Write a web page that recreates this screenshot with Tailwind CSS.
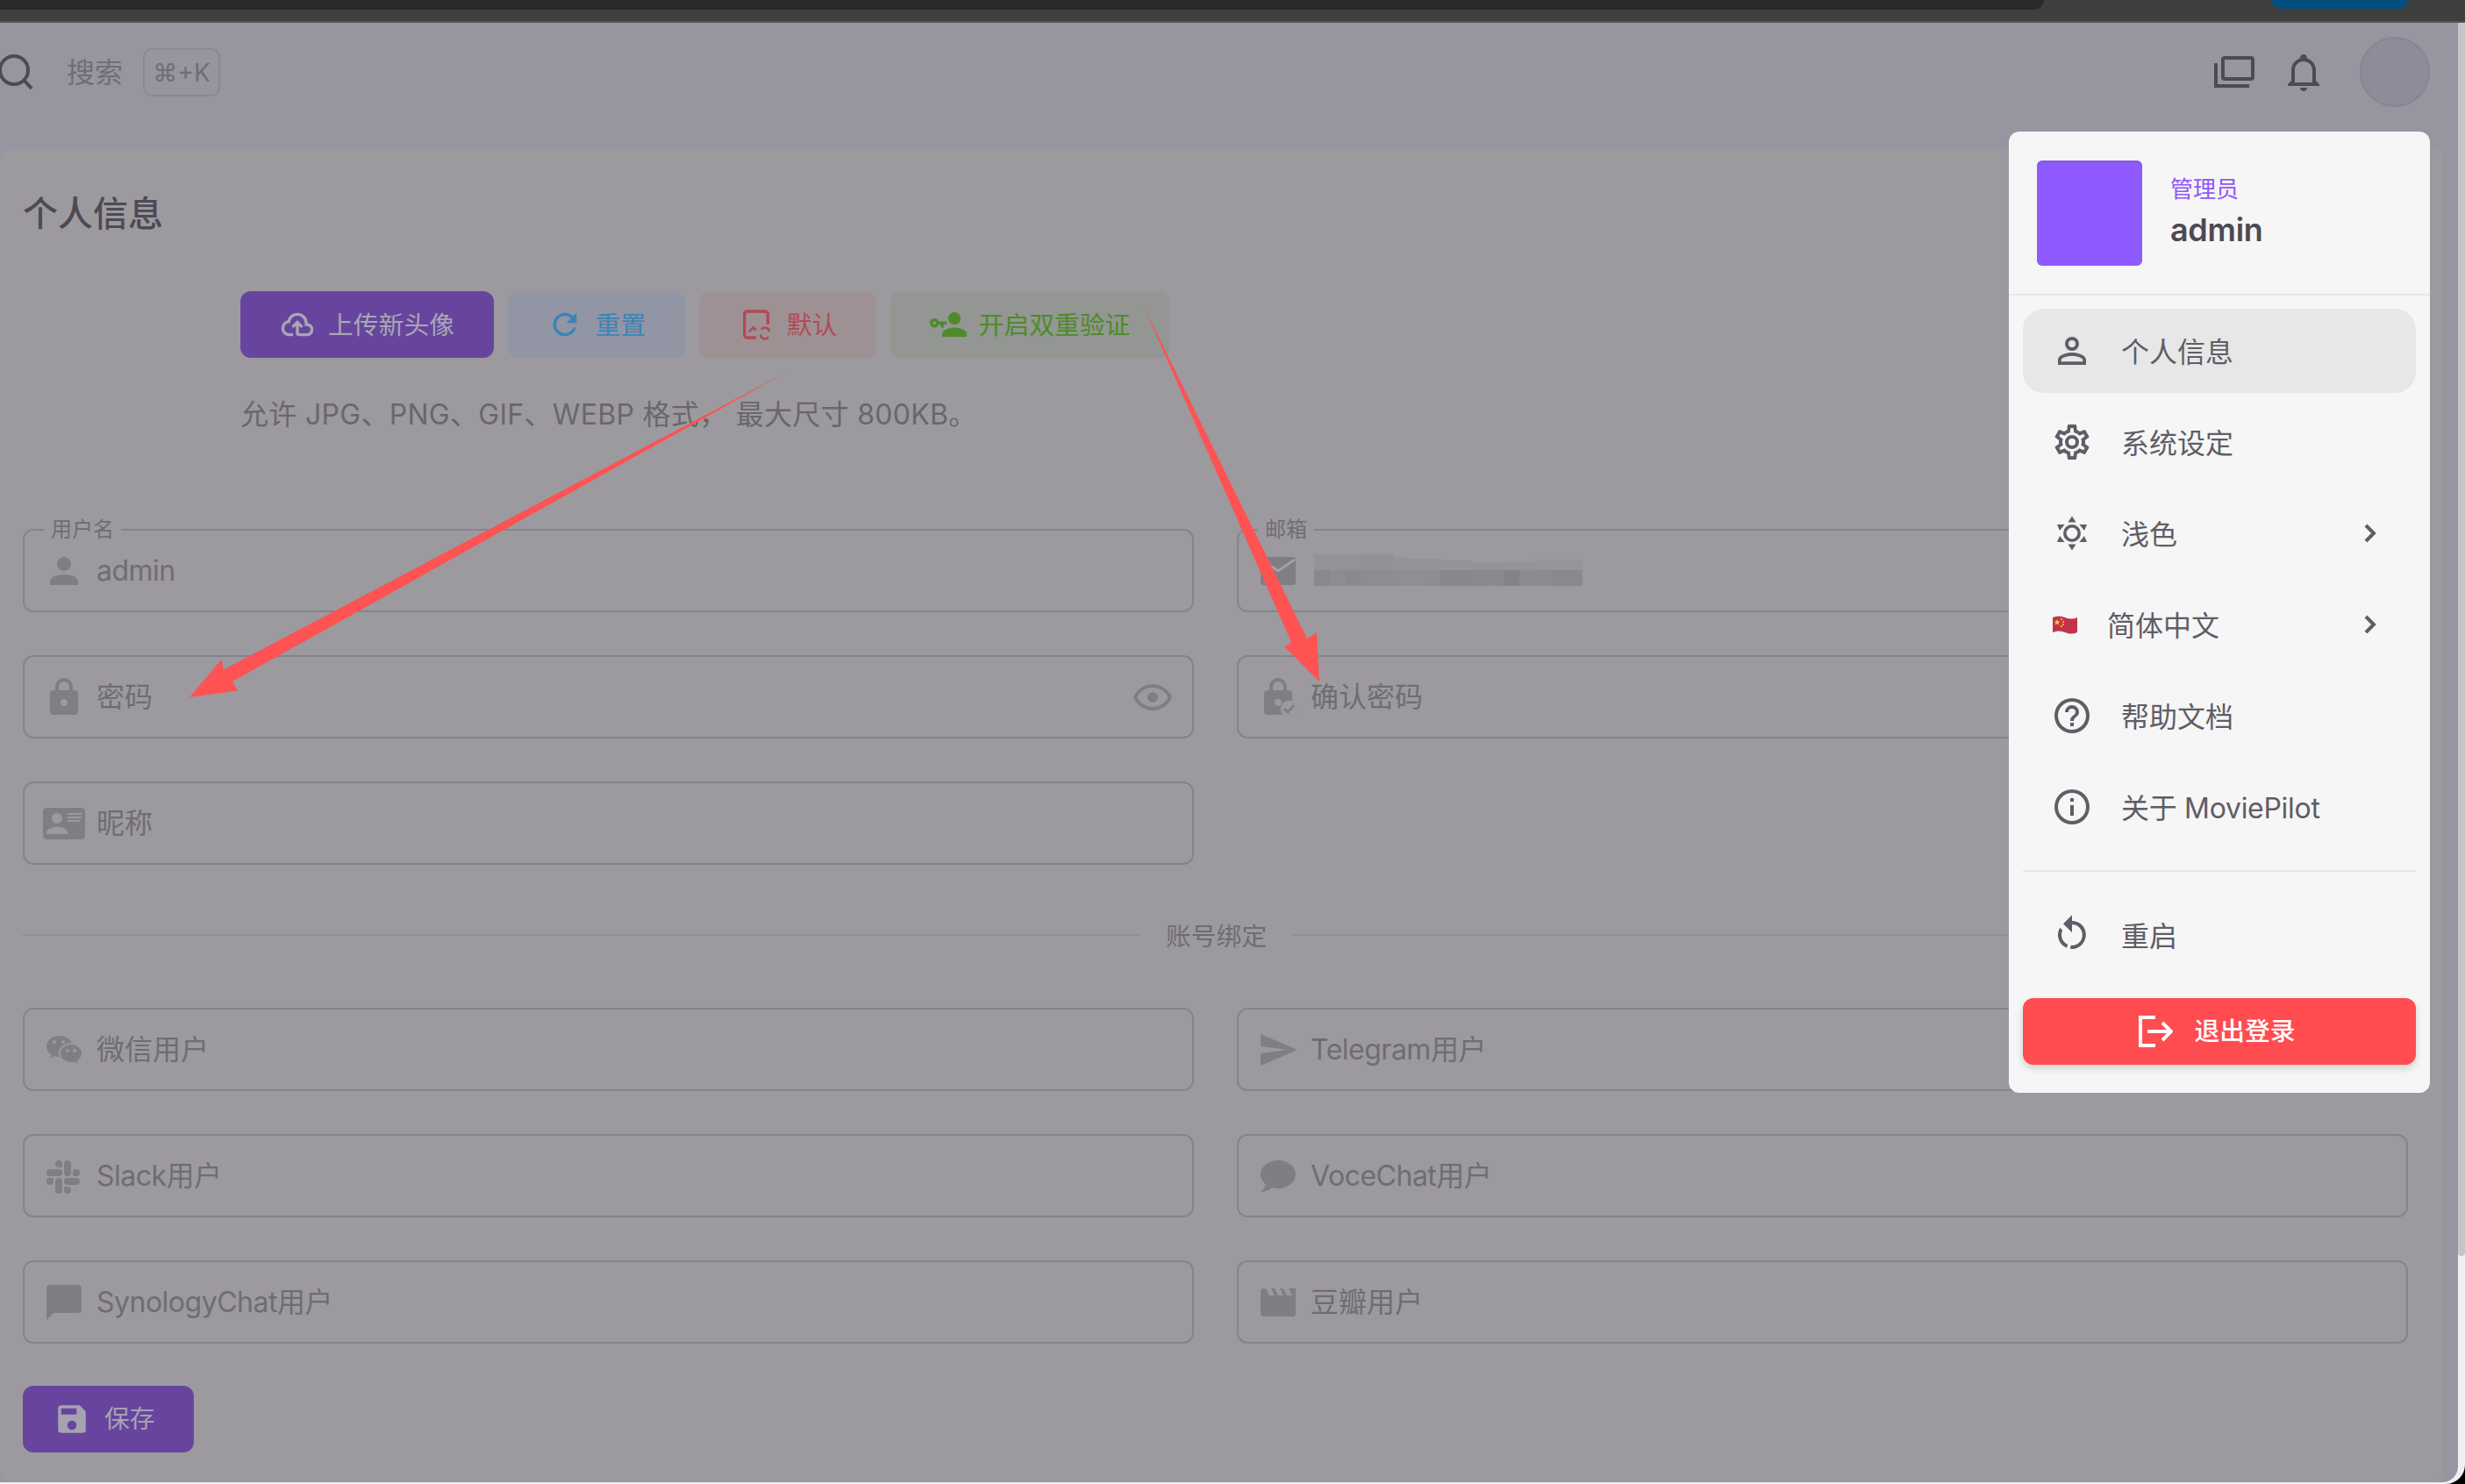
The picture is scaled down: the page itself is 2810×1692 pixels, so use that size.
<!DOCTYPE html>
<html lang="zh-CN">
<head>
    <meta charset="UTF-8">
    <meta name="viewport" content="width=device-width, initial-scale=1.0">
    <title>个人信息</title>
    <script src="https://cdn.jsdelivr.net/npm/@tailwindcss/browser@4"></script>
</head>
<body class="h-[1692px] w-[2810px] overflow-hidden bg-black [font-family:'Inter','Noto_Sans_CJK_SC',sans-serif] text-[#6f6d73]">
<div class="relative h-[1692px] w-[2810px] overflow-hidden rounded-br-[22px] bg-[#f0f0f4]">

    <!-- browser chrome strip -->
    <div class="flex h-[26px] items-start justify-between border-b-2 border-[#56555a] bg-[#3f3f3f]">
        <div class="h-[11px] w-[2330px] rounded-br-[24px] bg-[#2a2a2a]"></div>
        <div class="mr-[65px] h-[10px] w-[155px] rounded-b-[20px] bg-[#004f7f]"></div>
    </div>

    <div class="flex">
        <div class="h-[1664px] w-[2802px] rounded-br-[18px] bg-[#97959f]">
            <!-- top bar -->
            <header class="flex h-[144px] items-start justify-between pt-[16px] pr-[32px]">
                <div class="flex h-[80px] items-center">
                    <svg class="ml-[-3px] h-[42px] w-[42px] text-[#4d4a54]" viewBox="0 0 42 42" fill="none" stroke="currentColor" stroke-width="4"><circle cx="19" cy="19" r="16"/><path d="M30 30l9 10"/></svg>
                    <span class="ml-[37px] pt-[2px] text-[32px] text-[#706e76]">搜索</span>
                    <span class="ml-[23px] flex h-[55px] w-[88px] items-center justify-center rounded-[10px] border-2 border-[#8a8891] pt-[2px] text-[28px] text-[#706e76]">⌘+K</span>
                </div>
                <div class="flex h-[80px] items-center">
                    <svg class="h-[44px] w-[48px] text-[#4d4a54]" viewBox="0 0 48 44" fill="none" stroke="currentColor" stroke-width="4"><rect x="12" y="6" width="34" height="24" rx="2"/><path d="M4 12v26h38"/></svg>
                    <svg class="ml-[32px] h-[48px] w-[48px] text-[#4d4a54]" viewBox="0 0 24 24" fill="currentColor"><path d="M10 21H14C14 22.1 13.1 23 12 23S10 22.1 10 21M21 19V20H3V19L5 17V11C5 7.9 7 5.2 10 4.3V4C10 2.9 10.9 2 12 2S14 2.9 14 4V4.3C17 5.2 19 7.9 19 11V17L21 19M17 11C17 8.2 14.8 6 12 6S7 8.2 7 11V18H17V11Z"/></svg>
                    <div class="ml-[40px] h-[80px] w-[80px] rounded-full border-2 border-[#88858f] bg-[#8f8b9a]"></div>
                </div>
            </header>

            <!-- profile card -->
            <main class="h-[1520px] w-[2785px] rounded-[12px] bg-[#9c9a9e] pt-[46px] pr-[40px] pl-[26px]">
                <h1 class="pt-[2px] text-[40px] leading-[52px] font-medium text-[#4d4a54]">个人信息</h1>

                <div class="mt-[62px] ml-[248px] flex gap-[16px] text-[28.8px]">
                    <div class="flex h-[76px] w-[289px] items-center justify-center gap-[15px] rounded-[12px] bg-[#67459f] text-[#aaa6b4]">
                        <svg class="h-[40px] w-[40px]" viewBox="0 0 24 24" fill="currentColor"><path d="M6.500 20Q4.220 20 2.610 18.430 1 16.850 1 14.580 1 12.630 2.170 11.100 3.350 9.570 5.250 9.150 5.880 6.850 7.750 5.430 9.630 4 12 4 14.930 4 16.960 6.040 19 8.070 19 11 20.730 11.200 21.860 12.500 23 13.780 23 15.500 23 17.380 21.690 18.690 20.380 20 18.500 20H13Q12.180 20 11.590 19.410 11 18.830 11 18V12.850L9.400 14.400L8 13L12 9L16 13L14.600 14.400L13 12.850V18H18.500Q19.550 18 20.270 17.270 21 16.550 21 15.500 21 14.450 20.270 13.730 19.550 13 18.500 13H17V11Q17 8.930 15.540 7.460 14.080 6 12 6 9.930 6 8.460 7.460 7 8.930 7 11H6.500Q5.050 11 4.030 12.030 3 13.050 3 14.500 3 15.950 4.030 17 5.050 18 6.500 18H9V20Z"/></svg>
                        <span class="pt-[2px]">上传新头像</span>
                    </div>
                    <div class="flex h-[76px] w-[202px] items-center justify-center gap-[15px] rounded-[12px] bg-[#9295a3] text-[#3a84b8]">
                        <svg class="h-[40px] w-[40px]" viewBox="0 0 24 24" fill="currentColor"><path d="M17.65,6.35C16.2,4.9 14.21,4 12,4A8,8 0 0,0 4,12A8,8 0 0,0 12,20C15.73,20 18.84,17.45 19.73,14H17.65C16.83,16.33 14.61,18 12,18A6,6 0 0,1 6,12A6,6 0 0,1 12,6C13.66,6 15.14,6.69 16.22,7.78L13,11H20V4L17.65,6.35Z"/></svg>
                        <span class="pt-[2px]">重置</span>
                    </div>
                    <div class="flex h-[76px] w-[202px] items-center justify-center gap-[15px] rounded-[12px] bg-[#9e9194] text-[#b14a54]">
                        <svg class="h-[40px] w-[40px]" viewBox="0 0 24 24" fill="none" stroke="currentColor" stroke-width="2"><path d="M20 12V5a2 2 0 0 0-2-2H6a2 2 0 0 0-2 2v14a2 2 0 0 0 2 2h6"/><path d="M7 17l3-3 2 2" stroke-width="1.6"/><path d="M21 17a3 3 0 0 0-5.500-1.500M15 19a3 3 0 0 0 5.500 1.500" stroke-width="1.500"/></svg>
                        <span class="pt-[2px]">默认</span>
                    </div>
                    <div class="flex h-[76px] w-[318px] items-center justify-center gap-[14px] rounded-[12px] bg-[#939692] text-[#4f8a2a]">
                        <svg class="h-[42px] w-[42px]" viewBox="0 0 24 24" fill="currentColor"><path d="M11 10V12H9V14H7V12H5.820C5.400 13.170 4.290 14 3 14C1.340 14 0 12.660 0 11S1.340 8 3 8C4.290 8 5.400 8.830 5.820 10H11M3 10C2.450 10 2 10.450 2 11S2.450 12 3 12 4 11.550 4 11 3.550 10 3 10M16 14C18.670 14 24 15.340 24 18V20H8V18C8 15.340 13.330 14 16 14M16 12C13.790 12 12 10.210 12 8S13.790 4 16 4 20 5.790 20 8 18.210 12 16 12Z"/></svg>
                        <span class="pt-[2px]">开启双重验证</span>
                    </div>
                </div>

                <p class="mt-[43px] ml-[248px] text-[32px] leading-[44px] tracking-[0.3px] text-[#69676d]">允许 JPG、PNG、GIF、WEBP 格式， 最大尺寸 800KB。</p>

                <div class="mt-[108px] grid grid-cols-2 gap-x-[49px] gap-y-[49px] text-[32px]">
                    <div class="relative flex h-[95px] items-center gap-[13px] rounded-[12px] border-2 border-[#86848a] pl-[21px]">
                        <span class="absolute top-[-16px] left-[22px] bg-[#9c9a9e] px-[8px] text-[24px] leading-[30px]">用户名</span>
                        <svg class="h-[48px] w-[48px] text-[#807e85]" viewBox="0 0 24 24" fill="currentColor"><path d="M12,4A4,4 0 0,1 16,8A4,4 0 0,1 12,12A4,4 0 0,1 8,8A4,4 0 0,1 12,4M12,14C16.42,14 20,15.79 20,18V20H4V18C4,15.79 7.58,14 12,14Z"/></svg>
                        <span class="tracking-[-0.5px]">admin</span>
                    </div>
                    <div class="relative flex h-[95px] items-center gap-[13px] rounded-[12px] border-2 border-[#86848a] pl-[21px]">
                        <span class="absolute top-[-16px] left-[22px] bg-[#9c9a9e] px-[8px] text-[24px] leading-[30px]">邮箱</span>
                        <svg class="h-[48px] w-[48px] text-[#807e85]" viewBox="0 0 24 24"><rect x="2" y="4" width="20" height="16" rx="1.500" fill="currentColor"/><path d="M2.500 5.500L12 12L21.500 5.500" fill="none" stroke="#a3a1a6" stroke-width="1.400"/></svg>
                        <!-- pixelated-out address -->
                        <div class="mt-[-2px] ml-[4px] flex w-[306px] flex-col">
                            <div class="flex h-[18px] items-end">
                                <div class="h-[18px] w-[54px] bg-[#949297]"></div>
                                <div class="h-[18px] w-[18px] bg-[#939196]"></div>
                                <div class="h-[18px] w-[18px] bg-[#929095]"></div>
                                <div class="h-[15px] w-[18px] bg-[#959398]"></div>
                                <div class="h-[13px] w-[36px] bg-[#949297]"></div>
                                <div class="h-[11px] w-[36px] bg-[#959398]"></div>
                                <div class="h-[8px] w-[36px] bg-[#959398]"></div>
                                <div class="h-[10px] w-[36px] bg-[#969499]"></div>
                                <div class="h-[12px] w-[54px] bg-[#97959a]"></div>
                            </div>
                            <div class="flex h-[18px]">
                                <div class="h-full w-[18px] bg-[#8a888d]"></div>
                                <div class="h-full w-[18px] bg-[#8e8c91]"></div>
                                <div class="h-full w-[18px] bg-[#8b898e]"></div>
                                <div class="h-full w-[36px] bg-[#8e8c91]"></div>
                                <div class="h-full w-[36px] bg-[#908e93]"></div>
                                <div class="h-full w-[18px] bg-[#8f8d92]"></div>
                                <div class="h-full w-[36px] bg-[#89878c]"></div>
                                <div class="h-full w-[18px] bg-[#8a888d]"></div>
                                <div class="h-full w-[18px] bg-[#8b898e]"></div>
                                <div class="h-full w-[18px] bg-[#85838a]"></div>
                                <div class="h-full w-[36px] bg-[#8d8b90]"></div>
                                <div class="h-full w-[36px] bg-[#8a888d]"></div>
                            </div>
                        </div>
                    </div>
                    <div class="flex h-[95px] items-center gap-[13px] rounded-[12px] border-2 border-[#86848a] pr-[21px] pl-[21px]">
                        <svg class="h-[48px] w-[48px] text-[#807e85]" viewBox="0 0 24 24" fill="currentColor"><path d="M12,17A2,2 0 0,0 14,15C14,13.89 13.1,13 12,13A2,2 0 0,0 10,15A2,2 0 0,0 12,17M18,8A2,2 0 0,1 20,10V20A2,2 0 0,1 18,22H6A2,2 0 0,1 4,20V10C4,8.89 4.9,8 6,8H7V6A5,5 0 0,1 12,1A5,5 0 0,1 17,6V8H18M12,3A3,3 0 0,0 9,6V8H15V6A3,3 0 0,0 12,3Z"/></svg>
                        <span class="flex-1">密码</span>
                        <svg class="h-[48px] w-[48px] text-[#807e85]" viewBox="0 0 24 24" fill="currentColor"><path d="M12,9A3,3 0 0,1 15,12A3,3 0 0,1 12,15A3,3 0 0,1 9,12A3,3 0 0,1 12,9M12,4.5C17,4.5 21.27,7.61 23,12C21.27,16.39 17,19.5 12,19.5C7,19.5 2.73,16.39 1,12C2.73,7.61 7,4.5 12,4.5M3.18,12C4.83,15.36 8.24,17.5 12,17.5C15.76,17.5 19.17,15.36 20.82,12C19.17,8.64 15.76,6.5 12,6.5C8.24,6.5 4.83,8.64 3.18,12Z"/></svg>
                    </div>
                    <div class="flex h-[95px] items-center gap-[13px] rounded-[12px] border-2 border-[#86848a] pl-[21px]">
                        <svg class="h-[48px] w-[48px] text-[#807e85]" viewBox="0 0 24 24" fill="currentColor"><path d="M12,17A2,2 0 0,0 14,15C14,13.89 13.1,13 12,13A2,2 0 0,0 10,15A2,2 0 0,0 12,17M18,8A2,2 0 0,1 20,10V20A2,2 0 0,1 18,22H6A2,2 0 0,1 4,20V10C4,8.89 4.9,8 6,8H7V6A5,5 0 0,1 12,1A5,5 0 0,1 17,6V8H18M12,3A3,3 0 0,0 9,6V8H15V6A3,3 0 0,0 12,3Z"/><circle cx="18" cy="18.5" r="4.6" fill="#9c9a9e"/><path d="M15.5 18.5l2 2 3.5-4" fill="none" stroke="currentColor" stroke-width="1.5"/></svg>
                        <span>确认密码</span>
                    </div>
                    <div class="flex h-[95px] items-center gap-[13px] rounded-[12px] border-2 border-[#86848a] pl-[21px]">
                        <svg class="h-[48px] w-[48px] text-[#807e85]" viewBox="0 0 24 24" fill="currentColor"><path d="M2,3H22C23.05,3 24,3.95 24,5V19C24,20.05 23.05,21 22,21H2C0.95,21 0,20.05 0,19V5C0,3.95 0.95,3 2,3M14,6V7H22V6H14M14,8V9H21.5L22,9V8H14M14,10V11H21V10H14M8,13.91C6,13.91 2,15 2,17V18H14V17C14,15 10,13.91 8,13.91M8,6A3,3 0 0,0 5,9A3,3 0 0,0 8,12A3,3 0 0,0 11,9A3,3 0 0,0 8,6Z"/></svg>
                        <span>昵称</span>
                    </div>
                </div>

                <div class="mt-[63px] flex h-[34px] items-center text-[28.8px]">
                    <div class="h-[2px] w-[1273px] bg-[#8f8d92]"></div>
                    <span class="mx-[30px] pt-[3px] whitespace-nowrap">账号绑定</span>
                    <div class="h-[2px] flex-1 bg-[#8f8d92]"></div>
                </div>

                <div class="mt-[66px] grid grid-cols-2 gap-x-[49px] gap-y-[49px] text-[32px]">
                    <div class="flex h-[95px] items-center gap-[13px] rounded-[12px] border-2 border-[#86848a] pl-[21px]">
                        <svg class="h-[48px] w-[48px] text-[#807e85]" viewBox="0 0 24 24" fill="currentColor"><path d="M9.5,4C5.36,4 2,6.69 2,10C2,11.89 3.08,13.56 4.78,14.66L4,17L6.5,15.5C7.39,15.81 8.37,16 9.41,16C9.15,15.37 9,14.7 9,14C9,10.69 12.13,8 16,8C16.19,8 16.38,8 16.56,8.03C15.54,5.69 12.78,4 9.5,4M6.5,6.5A1,1 0 0,1 7.5,7.5A1,1 0 0,1 6.5,8.5A1,1 0 0,1 5.5,7.5A1,1 0 0,1 6.5,6.5M11.5,6.5A1,1 0 0,1 12.5,7.5A1,1 0 0,1 11.5,8.5A1,1 0 0,1 10.5,7.5A1,1 0 0,1 11.5,6.5M16,9C12.69,9 10,11.24 10,14C10,16.76 12.69,19 16,19C16.67,19 17.31,18.9 17.91,18.73L20,20L19.38,18.13C20.95,17.22 22,15.71 22,14C22,11.24 19.31,9 16,9M14,11.5A1,1 0 0,1 15,12.5A1,1 0 0,1 14,13.5A1,1 0 0,1 13,12.5A1,1 0 0,1 14,11.5M18,11.5A1,1 0 0,1 19,12.5A1,1 0 0,1 18,13.5A1,1 0 0,1 17,12.5A1,1 0 0,1 18,11.5Z"/></svg>
                        <span>微信用户</span>
                    </div>
                    <div class="flex h-[95px] items-center gap-[13px] rounded-[12px] border-2 border-[#86848a] pl-[21px]">
                        <svg class="h-[48px] w-[48px] text-[#807e85]" viewBox="0 0 24 24" fill="currentColor"><path d="M2,21L23,12L2,3V10L17,12L2,14V21Z"/></svg>
                        <span class="tracking-[-0.5px]">Telegram用户</span>
                    </div>
                    <div class="flex h-[95px] items-center gap-[13px] rounded-[12px] border-2 border-[#86848a] pl-[21px]">
                        <svg class="h-[48px] w-[48px] text-[#807e85]" viewBox="0 0 24 24" fill="currentColor"><path d="M6,15A2,2 0 0,1 4,17A2,2 0 0,1 2,15A2,2 0 0,1 4,13H6V15M7,15A2,2 0 0,1 9,13A2,2 0 0,1 11,15V20A2,2 0 0,1 9,22A2,2 0 0,1 7,20V15M9,7A2,2 0 0,1 7,5A2,2 0 0,1 9,3A2,2 0 0,1 11,5V7H9M9,8A2,2 0 0,1 11,10A2,2 0 0,1 9,12H4A2,2 0 0,1 2,10A2,2 0 0,1 4,8H9M17,10A2,2 0 0,1 19,8A2,2 0 0,1 21,10A2,2 0 0,1 19,12H17V10M16,10A2,2 0 0,1 14,12A2,2 0 0,1 12,10V5A2,2 0 0,1 14,3A2,2 0 0,1 16,5V10M14,18A2,2 0 0,1 16,20A2,2 0 0,1 14,22A2,2 0 0,1 12,20V18H14M14,17A2,2 0 0,1 12,15A2,2 0 0,1 14,13H19A2,2 0 0,1 21,15A2,2 0 0,1 19,17H14Z"/></svg>
                        <span class="tracking-[-0.5px]">Slack用户</span>
                    </div>
                    <div class="flex h-[95px] items-center gap-[13px] rounded-[12px] border-2 border-[#86848a] pl-[21px]">
                        <svg class="h-[48px] w-[48px] text-[#807e85]" viewBox="0 0 24 24" fill="currentColor"><path d="M12,3C17.5,3 22,6.58 22,11C22,15.42 17.5,19 12,19C10.76,19 9.57,18.82 8.47,18.5C5.55,21 2,21 2,21C4.33,18.67 4.7,17.1 4.75,16.5C3.05,15.07 2,13.13 2,11C2,6.58 6.5,3 12,3Z"/></svg>
                        <span class="tracking-[-0.5px]">VoceChat用户</span>
                    </div>
                    <div class="flex h-[95px] items-center gap-[13px] rounded-[12px] border-2 border-[#86848a] pl-[21px]">
                        <svg class="h-[48px] w-[48px] text-[#807e85]" viewBox="0 0 24 24" fill="currentColor"><path d="M20,2H4A2,2 0 0,0 2,4V22L6,18H20A2,2 0 0,0 22,16V4C22,2.89 21.1,2 20,2Z"/></svg>
                        <span class="tracking-[-0.5px]">SynologyChat用户</span>
                    </div>
                    <div class="flex h-[95px] items-center gap-[13px] rounded-[12px] border-2 border-[#86848a] pl-[21px]">
                        <svg class="h-[48px] w-[48px] text-[#807e85]" viewBox="0 0 24 24" fill="currentColor"><path d="M18,4L20,8H17L15,4H13L15,8H12L10,4H8L10,8H7L5,4H4A2,2 0 0,0 2,6V18A2,2 0 0,0 4,20H20A2,2 0 0,0 22,18V4H18Z"/></svg>
                        <span>豆瓣用户</span>
                    </div>
                </div>

                <div class="mt-[48px] flex h-[76px] w-[195px] items-center gap-[16px] rounded-[12px] bg-[#67459f] pl-[35px] text-[28.8px] text-[#a7a2b0]">
                    <svg class="h-[42px] w-[42px]" viewBox="0 0 24 24" fill="currentColor"><path d="M15,9H5V5H15M12,19A3,3 0 0,1 9,16A3,3 0 0,1 12,13A3,3 0 0,1 15,16A3,3 0 0,1 12,19M17,3H5C3.89,3 3,3.9 3,5V19A2,2 0 0,0 5,21H19A2,2 0 0,0 21,19V7L17,3Z"/></svg>
                    <span>保存</span>
                </div>
            </main>
        </div>
        <!-- scrollbar thumb -->
        <div class="h-[1406px] w-[8px] rounded-b-[4px] bg-[#c5c4c7]"></div>
    </div>

    <!-- annotation arrows drawn on the screenshot -->
    <svg class="pointer-events-none absolute top-0 left-0 h-[1692px] w-[2810px]" viewBox="0 0 2810 1692" fill="#ff5252">
        <polygon points="897,424 265,777 271,787.5 216,795 252.5,752 255,763.6"/>
        <polygon points="1304,350 1490,728 1501,721 1504,777 1464.5,737.5 1472,732"/>
    </svg>

    <!-- user menu -->
    <div class="absolute top-[150px] left-[2290px] h-[1096px] w-[480px] rounded-[12px] bg-[#f6f6f6] text-[32px] text-[#5f5d66]">
        <div class="flex h-[187px] items-center gap-[32px] border-b-2 border-[#e7e7e7] pl-[32px]">
            <div class="h-[120px] w-[120px] rounded-[6px] border-t-[3px] border-[#8658e6] bg-[#8f5aff]"></div>
            <div class="pb-[2px]">
                <div class="text-[26px] leading-[36px] text-[#9155fd]">管理员</div>
                <div class="mt-[4px] text-[36px] leading-[48px] font-semibold tracking-[-0.3px] text-[#4c4a54]">admin</div>
            </div>
        </div>

        <div class="mt-[15px] flex flex-col gap-[8px] px-[16px]">
            <div class="flex h-[96px] items-center gap-[32px] rounded-[24px] bg-[#e7e7e7] pl-[32px]">
                <svg class="h-[48px] w-[48px]" viewBox="0 0 24 24" fill="currentColor"><path d="M12,4A4,4 0 0,1 16,8A4,4 0 0,1 12,12A4,4 0 0,1 8,8A4,4 0 0,1 12,4M12,6A2,2 0 0,0 10,8A2,2 0 0,0 12,10A2,2 0 0,0 14,8A2,2 0 0,0 12,6M12,13C14.67,13 20,14.33 20,17V20H4V17C4,14.33 9.33,13 12,13M12,14.9C9.03,14.9 5.9,16.36 5.9,17V18.1H18.1V17C18.1,16.36 14.97,14.9 12,14.9Z"/></svg>
                <span class="pt-[4px]">个人信息</span>
            </div>
            <div class="flex h-[96px] items-center gap-[32px] pl-[32px]">
                <svg class="h-[48px] w-[48px]" viewBox="0 0 24 24" fill="currentColor"><path d="M12,8A4,4 0 0,1 16,12A4,4 0 0,1 12,16A4,4 0 0,1 8,12A4,4 0 0,1 12,8M12,10A2,2 0 0,0 10,12A2,2 0 0,0 12,14A2,2 0 0,0 14,12A2,2 0 0,0 12,10M10,22C9.75,22 9.54,21.82 9.5,21.58L9.13,18.93C8.5,18.68 7.96,18.34 7.44,17.94L4.95,18.95C4.73,19.03 4.46,18.95 4.34,18.73L2.34,15.27C2.21,15.05 2.27,14.78 2.46,14.63L4.57,12.97L4.5,12L4.57,11L2.46,9.37C2.27,9.22 2.21,8.95 2.34,8.73L4.34,5.27C4.46,5.05 4.73,4.96 4.95,5.05L7.44,6.05C7.96,5.66 8.5,5.32 9.13,5.07L9.5,2.42C9.54,2.18 9.75,2 10,2H14C14.25,2 14.46,2.18 14.5,2.42L14.87,5.07C15.5,5.32 16.04,5.66 16.56,6.05L19.05,5.05C19.27,4.96 19.54,5.05 19.66,5.27L21.66,8.73C21.79,8.95 21.73,9.22 21.54,9.37L19.43,11L19.5,12L19.43,13L21.54,14.63C21.73,14.78 21.79,15.05 21.66,15.27L19.66,18.73C19.54,18.95 19.27,19.04 19.05,18.95L16.56,17.95C16.04,18.34 15.5,18.68 14.87,18.93L14.5,21.58C14.46,21.82 14.25,22 14,22H10M11.25,4L10.88,6.61C9.68,6.86 8.62,7.5 7.85,8.39L5.44,7.35L4.69,8.65L6.8,10.2C6.4,11.37 6.4,12.64 6.8,13.8L4.68,15.36L5.43,16.66L7.86,15.62C8.63,16.5 9.68,17.14 10.87,17.38L11.24,20H12.76L13.13,17.39C14.32,17.14 15.37,16.5 16.14,15.62L18.57,16.66L19.32,15.36L17.2,13.81C17.6,12.64 17.6,11.37 17.2,10.2L19.31,8.65L18.56,7.35L16.15,8.39C15.38,7.5 14.32,6.86 13.12,6.62L12.75,4H11.25Z"/></svg>
                <span class="pt-[4px]">系统设定</span>
            </div>
            <div class="flex h-[96px] items-center gap-[32px] pr-[28px] pl-[32px]">
                <svg class="h-[48px] w-[48px]" viewBox="0 0 24 24" fill="currentColor"><path fill-rule="evenodd" d="M12,7A5,5 0 1,1 12,17A5,5 0 1,1 12,7M12,8.800A3.200,3.200 0 1,0 12,15.200A3.200,3.200 0 1,0 12,8.800Z"/><path d="M12 2.300l2.300 3.400h-4.600zM12 21.700l-2.300-3.400h4.600zM3.500 7h4.300L5 10.500zM20.500 7h-4.300L19 10.500zM3.500 17h4.300L5 13.500zM20.500 17h-4.300L19 13.500z"/></svg>
                <span class="flex-1 pt-[4px]">浅色</span>
                <svg class="h-[48px] w-[48px]" viewBox="0 0 24 24" fill="none" stroke="currentColor" stroke-width="2"><path d="M9.5 7.5l4.5 4.5-4.5 4.5"/></svg>
            </div>
            <div class="flex h-[96px] items-center gap-[34px] pr-[28px] pl-[34px]">
                <svg class="h-[22px] w-[28px]" viewBox="0 0 28 22"><path d="M0 3q7-3 14 0t14 0v17q-7 3-14 0t-14 0z" fill="#c2334a"/><path d="M5 5l1 2.400 2.500.1-2 1.500.8 2.500L5 10l-2.300 1.500.8-2.500-2-1.500 2.500-.1z" fill="#f5d33c"/><circle cx="10" cy="5" r="1" fill="#f5d33c"/><circle cx="12" cy="8" r="1" fill="#f5d33c"/><circle cx="12" cy="11" r="1" fill="#f5d33c"/><circle cx="10" cy="13" r="1" fill="#f5d33c"/></svg>
                <span class="flex-1 pt-[4px]">简体中文</span>
                <svg class="h-[48px] w-[48px]" viewBox="0 0 24 24" fill="none" stroke="currentColor" stroke-width="2"><path d="M9.5 7.5l4.5 4.5-4.5 4.5"/></svg>
            </div>
            <div class="flex h-[96px] items-center gap-[32px] pl-[32px]">
                <svg class="h-[48px] w-[48px]" viewBox="0 0 24 24" fill="currentColor"><path d="M11,18H13V16H11V18M12,2A10,10 0 0,0 2,12A10,10 0 0,0 12,22A10,10 0 0,0 22,12A10,10 0 0,0 12,2M12,20C7.59,20 4,16.41 4,12C4,7.59 7.59,4 12,4C16.41,4 20,7.59 20,12C20,16.41 16.41,20 12,20M12,6A4,4 0 0,0 8,10H10A2,2 0 0,1 12,8A2,2 0 0,1 14,10C14,12 11,11.75 11,15H13C13,12.75 16,12.5 16,10A4,4 0 0,0 12,6Z"/></svg>
                <span class="pt-[4px]">帮助文档</span>
            </div>
            <div class="flex h-[96px] items-center gap-[32px] pl-[32px]">
                <svg class="h-[48px] w-[48px]" viewBox="0 0 24 24" fill="currentColor"><path d="M11,9H13V7H11M12,20C7.59,20 4,16.41 4,12C4,7.59 7.59,4 12,4C16.41,4 20,7.59 20,12C20,16.41 16.41,20 12,20M12,2A10,10 0 0,0 2,12A10,10 0 0,0 12,22A10,10 0 0,0 22,12A10,10 0 0,0 12,2M11,17H13V11H11V17Z"/></svg>
                <span class="pt-[4px] tracking-[-0.3px]">关于 MoviePilot</span>
            </div>
        </div>

        <div class="mx-[16px] my-[24px] h-[2px] bg-[#e7e7e7]"></div>

        <div class="flex h-[96px] items-center gap-[32px] pl-[48px]">
            <svg class="h-[48px] w-[48px]" viewBox="0 0 24 24" fill="currentColor"><path d="M12,4C14.1,4 16.1,4.8 17.6,6.3C20.7,9.4 20.7,14.5 17.6,17.6C15.8,19.5 13.3,20.2 10.9,19.9L11.4,17.9C13.1,18.1 14.9,17.5 16.2,16.2C18.5,13.9 18.5,10.1 16.2,7.7C15.1,6.6 13.5,6 12,6V10.6L7,5.6L12,0.6V4M6.3,17.6C3.7,15 3.3,11 5.1,7.9L6.6,9.4C5.5,11.6 5.9,14.4 7.8,16.2C8.3,16.7 8.9,17.1 9.6,17.4L9,19.4C8,19 7.1,18.4 6.3,17.6Z"/></svg>
            <span class="pt-[4px]">重启</span>
        </div>

        <div class="mx-[16px] mt-[24px] flex h-[76px] items-center justify-center gap-[24px] rounded-[12px] bg-[#ff4c51] pr-[6px] text-[28.8px] font-medium text-white shadow-[0_4px_8px_rgba(0,0,0,0.16)]">
            <svg class="h-[36px] w-[40px]" viewBox="0 0 40 36" fill="none" stroke="currentColor" stroke-width="4"><path d="M20 2H3v32h17"/><path d="M11 18h26M28 8l10 10-10 10"/></svg>
            <span>退出登录</span>
        </div>
    </div>
</div>
</body>
</html>
